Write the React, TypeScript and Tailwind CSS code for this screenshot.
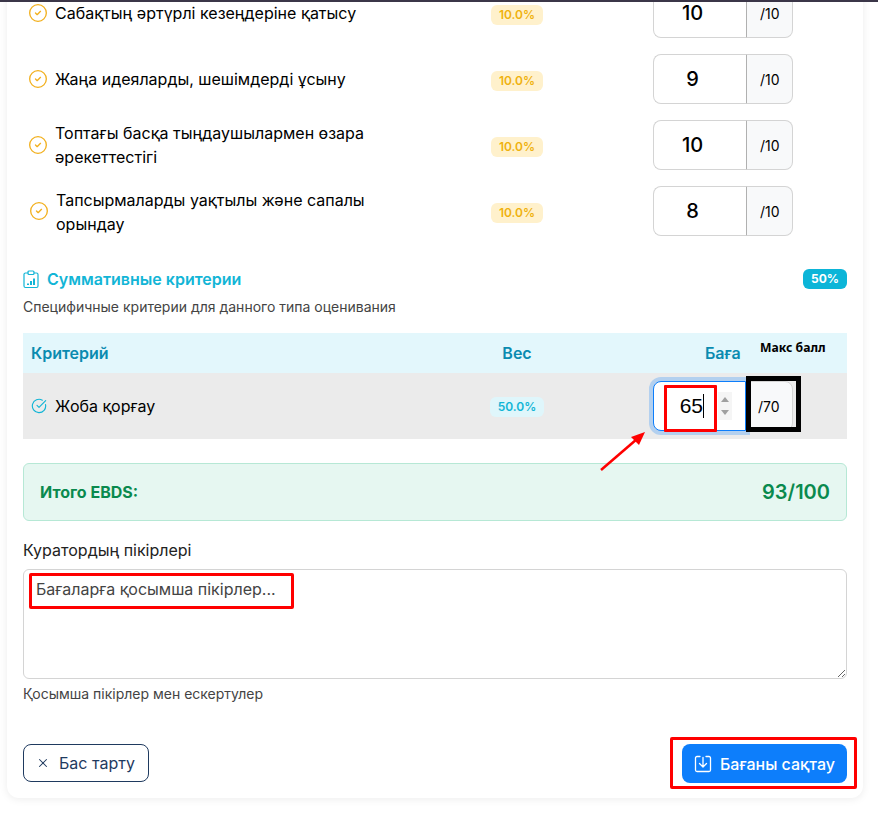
import React from 'react';
import { CircleCheck, CircleCheckBig, X } from 'lucide-react';

const rows = [
  { name: 'Сабақтың әртүрлі кезеңдеріне қатысу', score: '10' },
  { name: 'Жаңа идеяларды, шешімдерді ұсыну', score: '9' },
  { name: 'Топтағы басқа тыңдаушылармен өзара әрекеттестігі', score: '10' },
  { name: 'Тапсырмаларды уақтылы және сапалы орындау', score: '8' },
];

const ClipboardChart = () => (
  <svg width="16" height="19" viewBox="0 0 16 19" fill="none" stroke="#12b5d6" strokeWidth="1.2" strokeLinecap="round">
    <path d="M5 3H2.5A1.5 1.5 0 0 0 1 4.5v11.5A1.5 1.5 0 0 0 2.5 17.5h11a1.5 1.5 0 0 0 1.5-1.500V4.500A1.500 1.500 0 0 0 13.500 3H11" />
    <rect x="5" y="1" width="6" height="3.500" rx="1" />
    <path d="M5 15v-1.500M8 15v-4M11 15V8.500" strokeWidth="2" strokeLinecap="butt" />
  </svg>
);

const SaveIcon = () => (
  <svg width="18" height="18" viewBox="0 0 18 18" fill="none" stroke="#fff" strokeWidth="1.3" strokeLinecap="round" strokeLinejoin="round">
    <path d="M6 1.500H3A1.500 1.500 0 0 0 1.500 3v12A1.500 1.500 0 0 0 3 16.500h12a1.500 1.500 0 0 0 1.500-1.500V3A1.500 1.500 0 0 0 15 1.500h-3" />
    <path d="M9 2.500v9M5.500 8.500 9 12l3.500-3.500" />
  </svg>
);

const App = () => {
  return (
    <div className="h-[820px] overflow-hidden bg-white font-['Inter',sans-serif] text-black">
      <div className="relative z-10 h-[2px] bg-[#3b3648]" />
      <div className="-mt-[22px] ml-[7px] w-[856px] rounded-b-xl bg-white px-4 pb-[15px] shadow-[0_1px_8px_rgba(0,0,0,0.08)]">
        {rows.map((row, i) => (
          <div key={row.name} className="flex h-[66px] items-center">
            <div className={`flex w-[408px] items-center gap-[7px] ${i === 3 ? 'pl-[6px]' : 'pl-[5px]'}`}>
              <CircleCheck size={20} strokeWidth={1.6} className="shrink-0 text-[#f2b01e]" />
              <span className={`w-[330px] text-[16px] leading-6 ${i === 3 ? 'mt-[2px]' : ''}`}>{row.name}</span>
            </div>
            <div className="mt-1 flex w-[172px] justify-center">
              <span className="rounded-md bg-[#fff1cc] px-2 py-[2px] text-[12px] leading-4 font-semibold text-[#efb10f]">10.0%</span>
            </div>
            <div className="flex flex-1 pl-[50px]">
              <input
                readOnly
                value={row.score}
                className="h-[50px] w-[93px] rounded-l-lg border border-r-0 border-[#d4d4d4] bg-white pr-[15px] text-center text-[20px] font-medium outline-none"
              />
              <div className="flex h-[50px] w-[47px] items-center rounded-r-lg border border-[#d4d4d4] border-l-[#b0b0b0] bg-[#f8f9fa] pl-[13px] text-[14px]">/10</div>
            </div>
          </div>
        ))}

        <div className="mt-[25px] flex h-[20px] items-center justify-between">
          <div className="flex items-center gap-2">
            <ClipboardChart />
            <h3 className="text-[16px] font-semibold text-[#12b5d6]">Суммативные критерии</h3>
          </div>
          <span className="rounded-md bg-[#0cb5d8] px-2 py-[2px] text-[12px] leading-4 font-bold text-white">50%</span>
        </div>
        <p className="mt-[8px] text-[14px] leading-5 text-[#444]">Специфичные критерии для данного типа оценивания</p>

        <div className="mt-[16px] flex h-[40px] bg-[#e3f7fc]">
          <div className="flex w-[408px] items-center pl-2 text-[16px] font-semibold text-[#0a8bb0]">Критерий</div>
          <div className="flex w-[172px] items-center justify-center text-[16px] font-semibold text-[#0a8bb0]">Вес</div>
          <div className="relative flex flex-1 items-center pl-[102px] text-[16px] font-semibold text-[#0a8bb0]">
            Баға
            <span className="absolute top-[7px] left-[157px] font-['Noto_Sans',sans-serif] text-[12.2px] leading-4 font-bold whitespace-nowrap text-black">Макс балл</span>
          </div>
        </div>

        <div className="flex h-[66px] items-center bg-[#ebebeb]">
          <div className="flex w-[408px] items-center gap-[8px] pl-2">
            <CircleCheckBig size={16} strokeWidth={1.7} className="shrink-0 text-[#12b5d6]" />
            <span className="text-[16px] leading-6">Жоба қорғау</span>
          </div>
          <div className="mt-[2px] flex w-[172px] justify-center">
            <span className="rounded-md bg-[#dff6fb] px-2 py-[2px] text-[12px] leading-4 font-semibold text-[#12b5d6]">50.0%</span>
          </div>
          <div className="relative flex flex-1 pl-[50px]">
            <div className="relative flex h-[50px] w-[93px] items-center justify-end rounded-l-lg border border-[#0d7efb] bg-white pr-[13px] shadow-[0_0_0_4px_rgba(13,126,251,0.25)]">
              <span className="font-['Liberation_Sans',sans-serif] text-[21px] leading-6">65</span>
              <span className="mr-[14px] h-[24px] w-px bg-black" />
              <div className="flex h-[28px] w-[14px] flex-col items-center justify-center gap-[8px] bg-[#f5f5f5]">
                <span className="h-0 w-0 border-x-[4px] border-b-[5px] border-x-transparent border-b-[#a0a0a0]" />
                <span className="h-0 w-0 border-x-[4px] border-t-[5px] border-x-transparent border-t-[#a0a0a0]" />
              </div>
            </div>
            <div className="relative flex h-[50px] w-[47px] items-center rounded-r-lg border border-[#d4d4d4] bg-[#f8f9fa] pl-[11px] text-[14px]">/70</div>
            {/* annotations on top of the screenshot */}
            <div className="absolute top-[4px] left-[61px] h-[47px] w-[53px] rounded-[1px] border-[3px] border-[#ff0000]" />
            <div className="absolute top-[-5px] left-[143px] h-[56px] w-[55px] border-[5px] border-black" />
          </div>
        </div>

        <div className="mt-[24px] flex h-[58px] items-center justify-between rounded-md border border-[#b6e8d5] bg-[#e6f7f1] px-4">
          <span className="text-[16px] font-bold text-[#0a8a4e]">Итого EBDS:</span>
          <span className="text-[20px] font-semibold text-[#0a8a4e]">93/100</span>
        </div>

        <label className="mt-[17px] block text-[16px] leading-6 text-[#222]">Куратордың пікірлері</label>
        <div className="relative mt-[7px]">
          <textarea
            readOnly
            placeholder="Бағаларға қосымша пікірлер..."
            className="block h-[110px] w-full rounded-md border border-[#d4d4d4] bg-white px-3 py-[7px] text-[16px] leading-6 outline-none placeholder:text-[#444]"
          />
          <div className="absolute top-[4px] left-[6px] h-[36px] w-[265px] rounded-[2px] border-[3px] border-[#ff0000]" />
        </div>
        <p className="mt-[5px] text-[14px] leading-5 text-[#444]">Қосымша пікірлер мен ескертулер</p>

        <div className="mt-[40px] flex items-start justify-between">
          <button className="flex h-[38px] w-[126px] items-center gap-[9px] rounded-lg border border-[#1f3a5f] bg-white pl-[12px] text-[16px] text-[#1f3a5f]">
            <X size={14} strokeWidth={1.8} />
            Бас тарту
          </button>
          <div className="-mt-[7px] -mr-[10px] -mb-[6px] rounded-[2px] border-[3px] border-[#ff0000] pt-[4px] pr-[7px] pb-[3px] pl-[9px]">
            <button className="flex h-[39px] w-[165px] items-center justify-center gap-2 rounded-lg bg-[#0d7efb] text-[16px] font-medium text-white">
              <SaveIcon />
              Бағаны сақтау
            </button>
          </div>
        </div>
      </div>

      {/* red arrow drawn over the page */}
      <svg className="absolute top-[425px] left-[595px]" width="55" height="50" viewBox="0 0 55 50" fill="none">
        <path d="M6 45 42 14" stroke="#ff0000" strokeWidth="2.500" />
        <path d="M50 7 36 12 44 20Z" fill="#ff0000" />
      </svg>
    </div>
  );
};

export default App;
